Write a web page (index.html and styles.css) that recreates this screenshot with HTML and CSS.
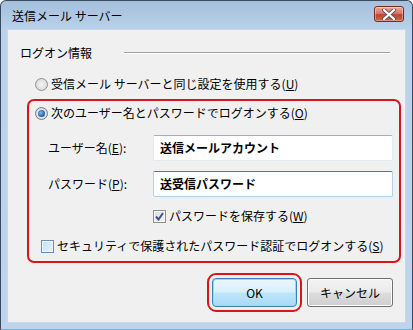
FILE: index.html
```html
<!DOCTYPE html>
<html lang="ja">
<head>
<meta charset="utf-8">
<link rel="stylesheet" href="styles.css">
</head>
<body>
<div class="window">
  <div class="titlebar">
    <span class="title">送信メール サーバー</span>
    <div class="close">
      <svg width="16" height="11" viewBox="0 0 16 11"><path d="M3 1 L13 10 M13 1 L3 10" stroke="#5a5a5a" stroke-width="4" stroke-linecap="round"/><path d="M3 1 L13 10 M13 1 L3 10" stroke="#ffffff" stroke-width="2.2" stroke-linecap="round"/></svg>
    </div>
  </div>
  <div class="client">
    <div class="group-header"><span>ログオン情報</span><div class="rule"></div></div>
    <div class="row row-first">
      <span class="radio"></span>
      <span>受信メール サーバーと同じ設定を使用する(<u>U</u>)</span>
    </div>
    <div class="highlight">
      <div class="row">
        <span class="radio checked"><span class="dot"></span></span>
        <span>次のユーザー名とパスワードでログオンする(<u>O</u>)</span>
      </div>
      <div class="form">
        <span class="label">ユーザー名(<u>E</u>):</span>
        <div class="input">送信メールアカウント</div>
        <span class="label">パスワード(<u>P</u>):</span>
        <div class="input focus">送受信パスワード</div>
      </div>
      <div class="row row-save">
        <span class="check">
          <svg width="9" height="9" viewBox="0 0 9 9"><path d="M1 4.5 L3.5 7.5 L8 1" fill="none" stroke="#3e548c" stroke-width="2"/></svg>
        </span>
        <span>パスワードを保存する(<u>W</u>)</span>
      </div>
      <div class="row row-spa">
        <span class="check light"></span>
        <span>セキュリティで保護されたパスワード認証でログオンする(<u>S</u>)</span>
      </div>
    </div>
    <div class="buttons">
      <div class="btn default">OK</div>
      <div class="btn">キャンセル</div>
    </div>
  </div>
</div>
</body>
</html>
```
FILE: styles.css
```css
html, body {
  margin: 0;
  padding: 0;
  background: #ffffff;
}
body {
  width: 413px;
  height: 330px;
  overflow: hidden;
  font-family: "Noto Sans CJK JP", "Noto Sans", sans-serif;
  font-size: 12px;
  color: #000;
}
.window {
  box-sizing: border-box;
  width: 413px;
  height: 330px;
  border: 1px solid #3a4a5a;
  border-bottom-color: #35c6e8;
  border-radius: 6px 6px 0 0;
  background: linear-gradient(to bottom, #a5c0dd 0px, #bad2ea 30px, #bdd4ec 100%);
  padding: 0 7px 7px 7px;
  display: flex;
  flex-direction: column;
}
.titlebar {
  height: 29px;
  display: flex;
  align-items: center;
  justify-content: space-between;
}
.title {
  margin-left: 4px;
  font-size: 12px;
  line-height: 16px;
  color: #000;
}
.close {
  box-sizing: border-box;
  width: 30px;
  height: 16px;
  margin-right: 1px;
  margin-top: -3px;
  border: 1px solid #7b2a22;
  border-radius: 3px;
  background: linear-gradient(to bottom, #e9a99c 0%, #d47a6c 45%, #c2412f 55%, #d0624f 100%);
  display: flex;
  align-items: center;
  justify-content: center;
  box-shadow: inset 0 0 0 1px rgba(255,255,255,0.35);
}
.client {
  flex: 1;
  background: #f0f0f0;
  display: flex;
  flex-direction: column;
  box-shadow: 0 0 0 1px #c8d9ea;
}
.group-header {
  display: flex;
  align-items: center;
  margin: 16px 15px 0 12px;
  height: 14px;
  line-height: 14px;
}
.rule {
  flex: 1;
  height: 1px;
  background: #a0a0a0;
  border-bottom: 1px solid #ffffff;
  margin-left: 32px;
}
.row {
  display: flex;
  align-items: center;
  height: 16px;
  line-height: 16px;
  gap: 3px;
}
.row-first {
  margin: 16px 0 0 27px;
}
.radio {
  box-sizing: border-box;
  width: 13px;
  height: 13px;
  border-radius: 50%;
  border: 1px solid #8f9090;
  background: radial-gradient(circle at 50% 50%, #f4f4f4 0%, #e2e2e2 55%, #cfcfcf 100%);
  display: flex;
  align-items: center;
  justify-content: center;
  flex: none;
}
.radio.checked {
  border-color: #6a7d95;
}
.dot {
  width: 7px;
  height: 7px;
  border-radius: 50%;
  background: radial-gradient(circle at 40% 40%, #7ec0ef 0%, #2a6db0 55%, #0f3f78 100%);
}
.highlight {
  box-sizing: border-box;
  margin: 7px 4px 0 19px;
  height: 164px;
  border: 2px solid #d8141c;
  border-radius: 7px;
  padding: 4px 6px 0 6px;
  display: flex;
  flex-direction: column;
}
.form {
  display: grid;
  grid-template-columns: 105px 1fr;
  row-gap: 10px;
  margin: 14px 0 0 13px;
  align-items: center;
}
.label {
  line-height: 16px;
}
.input {
  box-sizing: border-box;
  height: 26px;
  background: #fff;
  border: 1px solid #e3e9ef;
  border-top-color: #abadb3;
  border-radius: 2px;
  padding-left: 6px;
  font-weight: bold;
  line-height: 24px;
}
.input.focus {
  border-color: #b5cfe7;
  border-top-color: #3d7bad;
}
.row-save {
  margin: 11px 0 0 118px;
}
.row-spa {
  margin: 14px 0 0 6px;
}
.check {
  box-sizing: border-box;
  width: 13px;
  height: 13px;
  border: 1px solid #8f8f8f;
  background: linear-gradient(135deg, #dcdcdc 0%, #f6f6f6 100%);
  box-shadow: inset 0 0 0 1px #f4f4f4;
  display: flex;
  align-items: center;
  justify-content: center;
  flex: none;
}
.check.light {
  border-color: #6c8cb0;
  background: linear-gradient(135deg, #bfe0f5 0%, #e8f5fc 100%);
  box-shadow: inset 0 0 0 1px #eef8ff;
}
.buttons {
  display: flex;
  justify-content: flex-end;
  gap: 10px;
  margin: 15px 12px 0 0;
}
.btn {
  box-sizing: border-box;
  width: 86px;
  height: 29px;
  border: 1px solid #707070;
  border-radius: 3px;
  background: linear-gradient(to bottom, #f2f2f2 0%, #ebebeb 48%, #dddddd 52%, #cfcfcf 100%);
  box-shadow: inset 0 0 0 1px #fcfcfc;
  display: flex;
  align-items: center;
  justify-content: center;
  line-height: 16px;
}
.btn.default {
  width: 85px;
  border-color: #3c7fb1;
  background: linear-gradient(to bottom, #eaf6fd 0%, #d9f0fc 48%, #bee6fd 52%, #a7d9f5 100%);
  box-shadow: inset 0 0 0 1px #8ee0f8;
  outline: 2px solid #d8141c;
  outline-offset: 3px;
  border-radius: 4px;
}
```
